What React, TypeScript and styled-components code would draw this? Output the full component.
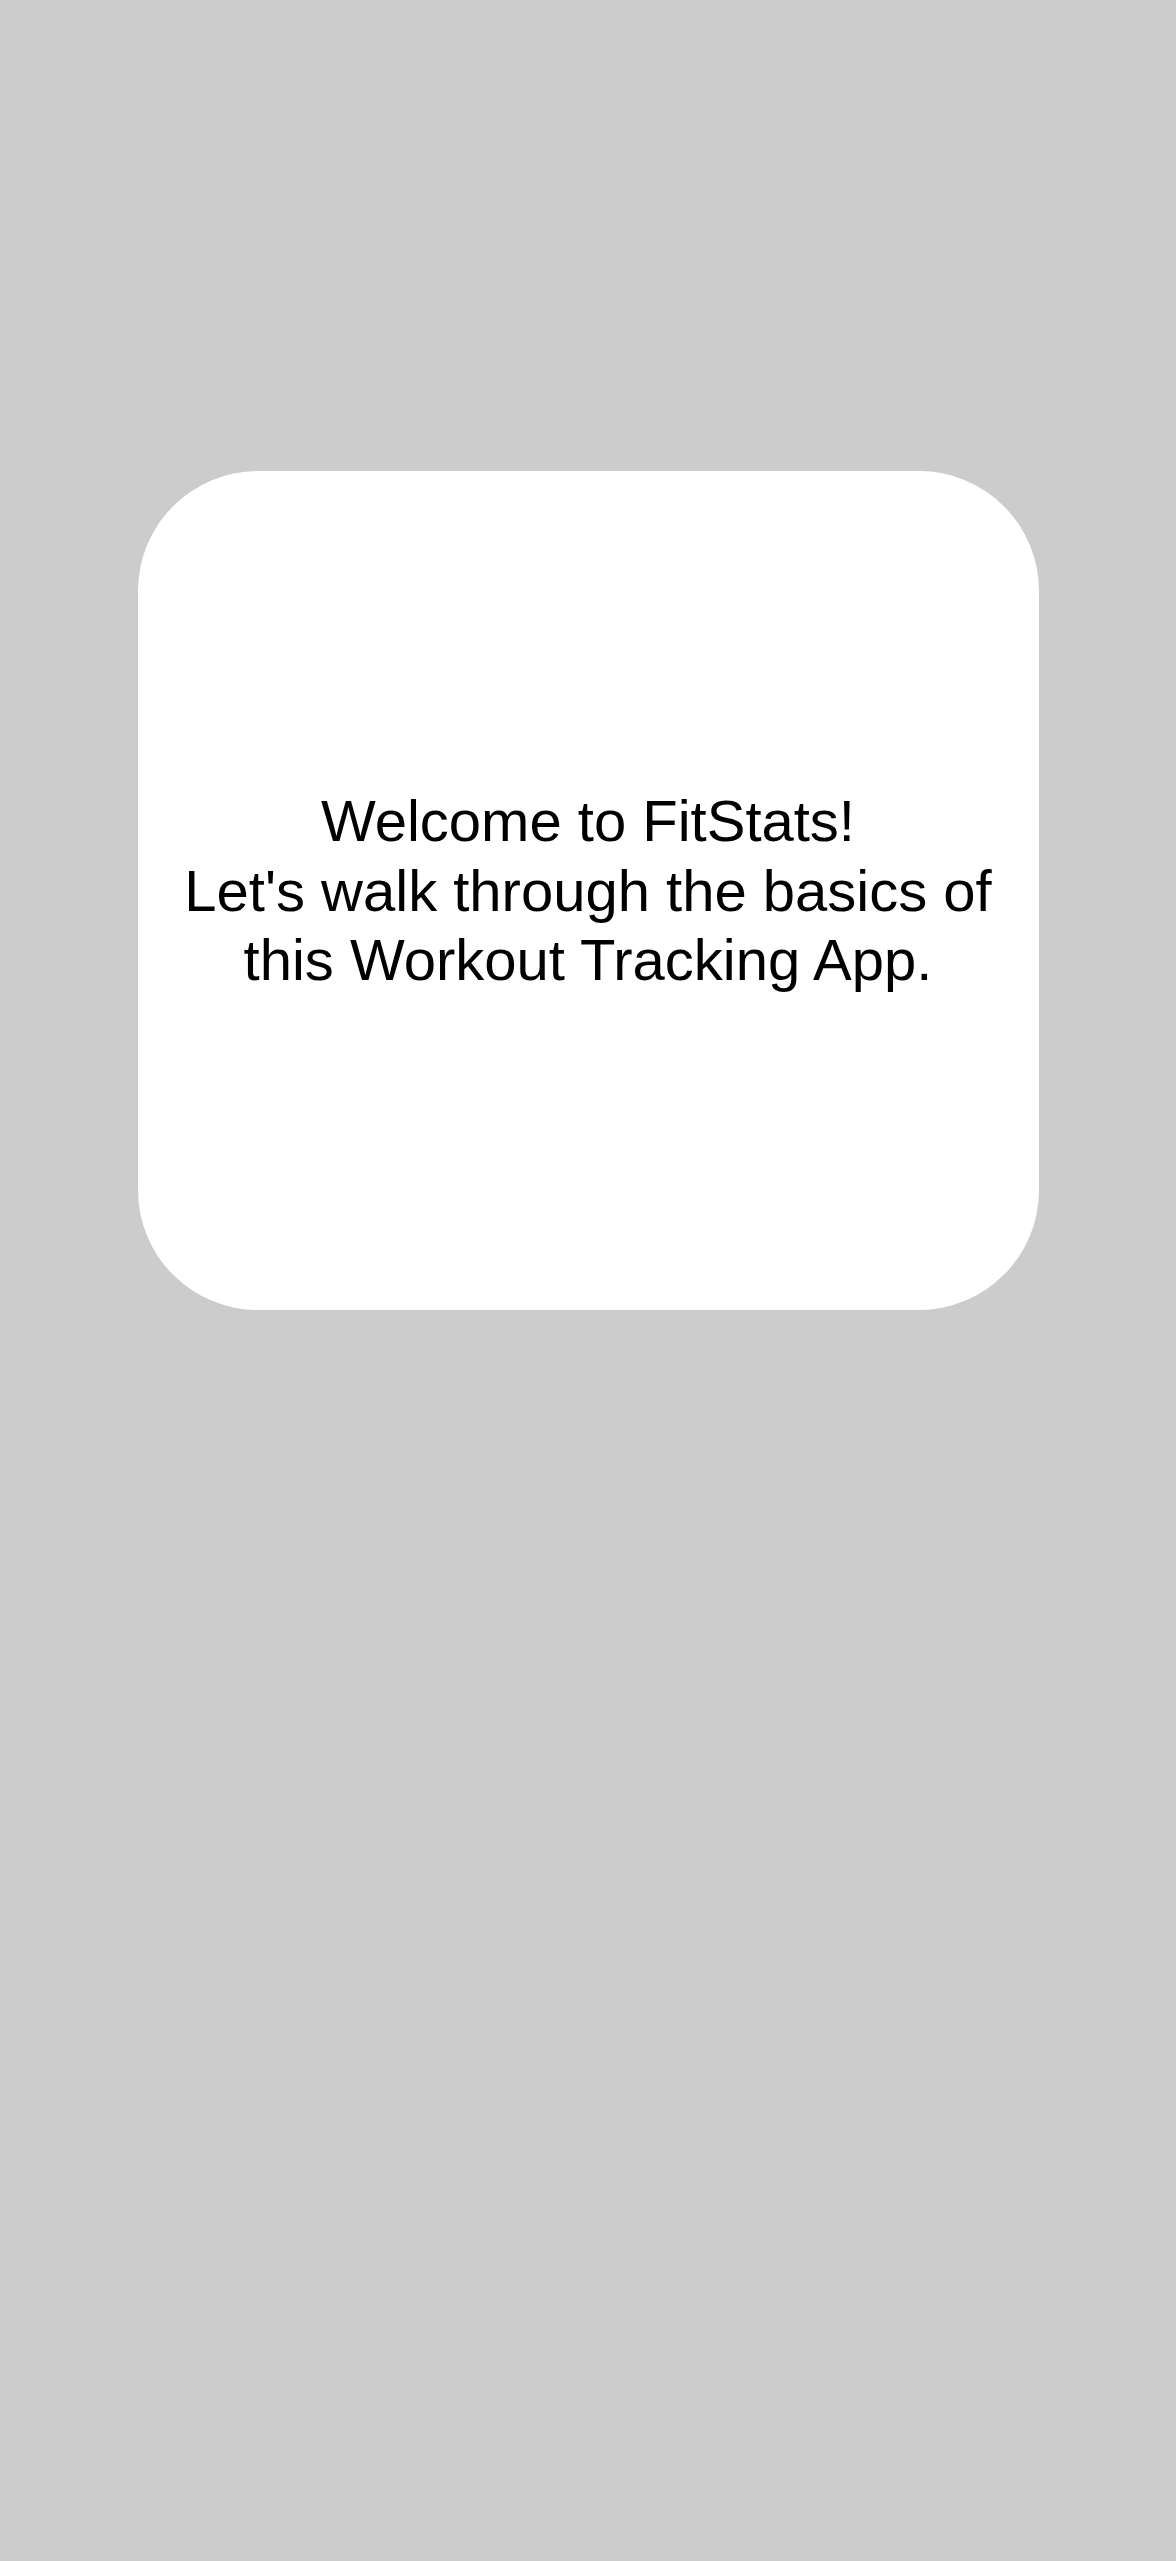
import React from "react";
import styled, { createGlobalStyle } from "styled-components";

const GlobalStyle = createGlobalStyle`
  html, body {
    margin: 0;
    padding: 0;
    min-height: 100%;
    background: #cccccc;
  }
  body {
    font-family: "Liberation Sans", Arial, Helvetica, sans-serif;
  }
`;

const Page = styled.main`
  min-height: 2561px;
  box-sizing: border-box;
  padding-top: 471px;
  display: flex;
  justify-content: center;
  align-items: flex-start;
  background: #cccccc;
`;

const Card = styled.section`
  width: 901px;
  height: 839px;
  box-sizing: border-box;
  background: #ffffff;
  border-radius: 120px;
  display: flex;
  align-items: center;
  justify-content: center;
  padding: 0 20px;
`;

const Message = styled.p`
  margin: 0;
  font-size: 58px;
  line-height: 1.2;
  color: #000000;
  text-align: center;
`;

export default function App() {
  return (
    <>
      <GlobalStyle />
      <Page>
        <Card>
          <Message>
            Welcome to FitStats!
            <br />
            Let's walk through the basics of this Workout Tracking App.
          </Message>
        </Card>
      </Page>
    </>
  );
}
